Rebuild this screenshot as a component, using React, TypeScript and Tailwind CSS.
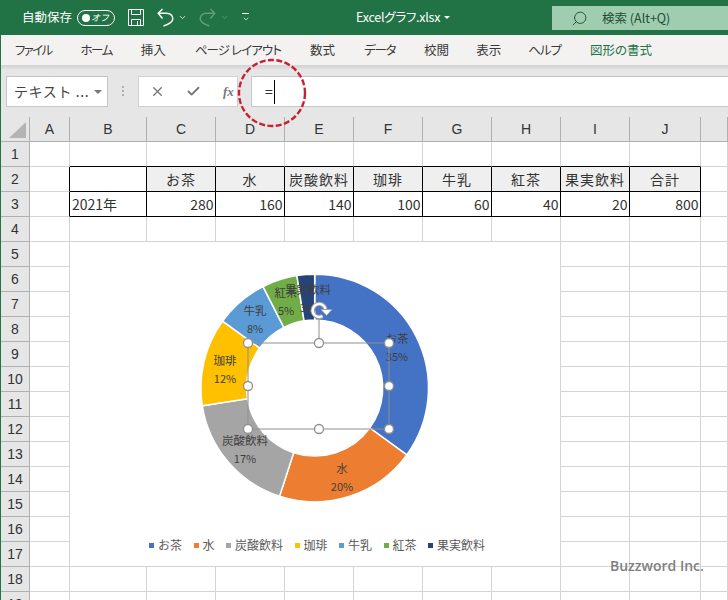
import { Search, X, Check, ChevronDown } from 'lucide-react';

const columns = ['A', 'B', 'C', 'D', 'E', 'F', 'G', 'H', 'I', 'J', ''];
const headers = ['お茶', '水', '炭酸飲料', '珈琲', '牛乳', '紅茶', '果実飲料', '合計'];
const values = ['280', '160', '140', '100', '60', '40', '20', '800'];
const rows = Array.from({ length: 19 }, (_, i) => i + 1);
const menus = [
  { name: 'ファイル', cls: 'tracking-[-1.7px]' },
  { name: 'ホーム', cls: 'tracking-[-1.5px]' },
  { name: '挿入', cls: '' },
  { name: 'ページ レイアウト', cls: 'tracking-[-0.9px]' },
  { name: '数式', cls: '' },
  { name: 'データ', cls: 'tracking-[-1.3px]' },
  { name: '校閲', cls: 'mr-[-2px]' },
  { name: '表示', cls: 'mr-[-2px]' },
  { name: 'ヘルプ', cls: 'tracking-[-1px]' },
];

const slices = [
  { name: 'お茶', value: 280, color: '#4472c4', legend: 'bg-[#4472c4]' },
  { name: '水', value: 160, color: '#ed7d31', legend: 'bg-[#ed7d31]' },
  { name: '炭酸飲料', value: 140, color: '#a5a5a5', legend: 'bg-[#a5a5a5]' },
  { name: '珈琲', value: 100, color: '#ffc000', legend: 'bg-[#ffc000]' },
  { name: '牛乳', value: 60, color: '#5b9bd5', legend: 'bg-[#5b9bd5]' },
  { name: '紅茶', value: 40, color: '#70ad47', legend: 'bg-[#70ad47]' },
  { name: '果実飲料', value: 20, color: '#264478', legend: 'bg-[#264478]' },
];

const labels = [
  { name: 'お茶', pct: '35%', pos: 'left-[327px] top-[88px]' },
  { name: '水', pct: '20%', pos: 'left-[272px] top-[218px]' },
  { name: '炭酸飲料', pct: '17%', pos: 'left-[175px] top-[190px]' },
  { name: '珈琲', pct: '12%', pos: 'left-[155px] top-[110px]' },
  { name: '牛乳', pct: '8%', pos: 'left-[185px] top-[60px]' },
  { name: '紅茶', pct: '5%', pos: 'left-[216px] top-[42px]' },
  { name: '果実飲料', pct: '3%', pos: 'left-[238px] top-[39px]' },
];

const cx = 244.7;
const cy = 146;
const outer = 113.8;
const inner = 68;

function slicePath(start: number, end: number) {
  const pt = (r: number, a: number) => `${cx + r * Math.sin(a)} ${cy - r * Math.cos(a)}`;
  const large = end - start > Math.PI ? 1 : 0;
  return `M${pt(outer, start)} A${outer} ${outer} 0 ${large} 1 ${pt(outer, end)} L${pt(inner, end)} A${inner} ${inner} 0 ${large} 0 ${pt(inner, start)} Z`;
}

function Donut() {
  let acc = 0;
  return (
    <svg className="absolute inset-0" width="490" height="324">
      {slices.map((s) => {
        const start = (acc / 800) * Math.PI * 2;
        acc += s.value;
        const end = (acc / 800) * Math.PI * 2;
        return <path key={s.name} d={slicePath(start, end)} fill={s.color} stroke="#fff" strokeWidth="1.5" />;
      })}
    </svg>
  );
}

function Selection() {
  const handles = [
    [178, 101], [249, 101], [319, 101],
    [178, 144], [319, 144],
    [178, 187], [249, 187], [319, 187],
  ];
  const ring = 'M255.5 67 A6.5 6.5 0 1 0 252.5 74';
  return (
    <svg className="absolute inset-0" width="490" height="324">
      <rect x="178" y="101" width="141" height="86" fill="none" stroke="#8f8f8f" strokeWidth="1" />
      <line x1="249" y1="76" x2="249" y2="101" stroke="#8f8f8f" strokeWidth="1" />
      {handles.map(([x, y]) => (
        <circle key={`${x}-${y}`} cx={x} cy={y} r="4.5" fill="#fff" stroke="#8f8f8f" strokeWidth="1.3" />
      ))}
      <path d={ring} fill="none" stroke="#9a9a9a" strokeWidth="4.4" />
      <path d={ring} fill="none" stroke="#fff" strokeWidth="2.4" />
      <path d="M251 67.5 L262 67.5 L256.5 73.5 Z" fill="#fff" stroke="#9a9a9a" strokeWidth="0.8" />
    </svg>
  );
}

function Chart() {
  return (
    <div className="absolute left-[69px] top-[125px] w-[490px] h-[324px] bg-white">
      <Donut />
      {labels.map((l) => (
        <div
          key={l.name}
          className={`absolute ${l.pos} -translate-x-1/2 flex flex-col items-center gap-[2px] text-[11px] leading-[16px] text-[#404040] whitespace-nowrap`}
        >
          <span className="text-[11.5px]">{l.name}</span>
          <span>{l.pct}</span>
        </div>
      ))}
      <Selection />
      <div className="absolute left-0 right-0 top-[295px] flex gap-[11.5px] pl-[79px] text-[12px] leading-[16px] text-[#595959]">
        {slices.map((s) => (
          <div key={s.name} className="flex items-center gap-[4px]">
            <span className={`w-[5px] h-[5px] ${s.legend}`} />
            <span>{s.name}</span>
          </div>
        ))}
      </div>
    </div>
  );
}

function Cell({ row, col }: { row: number; col: number }) {
  const inTableCol = col >= 1 && col <= 9;
  const inTableRow = row === 2 || row === 3;
  const rightBlack = inTableRow && col >= 0 && col <= 9;
  const bottomBlack = (row === 1 || inTableRow) && inTableCol;
  let content = '';
  let align = 'justify-center';
  if (row === 2 && col >= 2 && col <= 9) content = headers[col - 2];
  if (row === 3 && col === 1) {
    content = '2021年';
    align = 'justify-start pl-[2px]';
  }
  if (row === 3 && col >= 2 && col <= 9) {
    content = values[col - 2];
    align = 'justify-end pr-[1.5px]';
  }
  return (
    <div
      className={`flex items-center h-[25px] border-r border-b text-[14px] text-[#333] whitespace-nowrap ${align} ${
        rightBlack ? 'border-r-black' : 'border-r-[#d4d4d4]'
      } ${bottomBlack ? 'border-b-black' : 'border-b-[#d4d4d4]'} ${
        row === 2 && col >= 2 && col <= 9 ? 'bg-[#efefef] tracking-[1px]' : ''
      }`}
    >
      {content}
    </div>
  );
}

export default function App() {
  return (
    <div className="w-[728px] h-[600px] overflow-hidden bg-white [font-family:'Noto_Sans_CJK_JP','Liberation_Sans',sans-serif]">
      {/* タイトルバー */}
      <div className="h-[35px] bg-[#217346] flex items-center text-white relative">
        <span className="ml-[22px] w-[55px] text-[12.5px] [font-feature-settings:'palt']">自動保存</span>
        <div className="w-[38px] h-[16px] rounded-full border border-white flex items-center justify-between pl-[4px] pr-[5px]">
          <span className="w-[8px] h-[8px] rounded-full bg-white" />
          <span className="text-[9px] italic leading-none">オフ</span>
        </div>
        <svg className="ml-[13px]" width="16" height="17" viewBox="0 0 16 17" fill="none" stroke="#fff" strokeWidth="1">
          <path d="M.5 .5h15v16H.5z" />
          <path d="M3.5 .5v5h9v-5M3.5 16.5v-6h9v6M9.5 12v4" />
        </svg>
        <svg className="ml-[13px]" width="17" height="19" viewBox="0 0 17 19" fill="none" stroke="#fff" strokeWidth="1.4">
          <path d="M5.5 1 L1.2 5.2 L5.5 10.5" />
          <path d="M1.2 5.2 H9.5 C14 5.2 16.5 8.5 15.5 12 C14.8 14.5 11 16.5 6.5 18" />
        </svg>
        <ChevronDown className="ml-[4px]" size={9} strokeWidth={2} />
        <svg className="ml-[12px]" width="17" height="19" viewBox="0 0 17 19" fill="none" stroke="#5f9d7c" strokeWidth="1.4">
          <path d="M11.5 1 L15.8 5.2 L11.5 10.5" />
          <path d="M15.8 5.2 H7.5 C3 5.2 .5 8.5 1.5 12 C2.2 14.5 6 16.5 10.5 18" />
        </svg>
        <ChevronDown className="ml-[4px] text-[#5f9d7c]" size={9} strokeWidth={2} />
        <div className="ml-[13px] w-[7px] flex flex-col items-center gap-[2px]">
          <span className="w-[7px] h-[1px] bg-white" />
          <ChevronDown size={8} strokeWidth={2} className="-mt-[1px]" />
        </div>
        <div className="ml-[107px] w-[83px] text-[12.5px] tracking-[-0.25px] whitespace-nowrap [font-feature-settings:'palt']">Excelグラフ.xlsx</div>
        <span className="ml-[5px] w-0 h-0 border-x-[3px] border-x-transparent border-t-[3px] border-t-white" />
        <div className="ml-auto mt-[1px] w-[176px] h-[24px] bg-[#a0cdb0] flex items-center pl-[19px] text-[#1e4d33]">
          <Search className="-scale-x-100" size={17} strokeWidth={1.3} />
          <span className="ml-[14px] text-[12.5px] [font-feature-settings:'palt']">検索 (Alt+Q)</span>
        </div>
      </div>

      {/* メニュー */}
      <div className="h-[30px] bg-[#f3f2f1] flex items-center gap-[29px] pl-[14px] text-[12.5px] text-[#3b3a39] whitespace-nowrap [font-feature-settings:'palt'] border-l border-[#217346]">
        {menus.map((m) => (
          <span key={m.name} className={m.cls}>
            {m.name}
          </span>
        ))}
        <span className="text-[#217346]">図形の書式</span>
      </div>

      {/* 数式バー */}
      <div className="h-[52px] border-l border-[#217346] bg-gradient-to-b from-[#d2d2d2] from-0% to-[#e6e6e6] to-[10%] flex items-start pt-[11px] relative">
        <div className="ml-[5px] w-[102px] h-[31px] bg-white border border-[#c6c6c6] flex items-center pl-[7px] text-[14px] tracking-[0.6px] text-[#444] whitespace-nowrap">
          <span className="w-[80px]">テキスト ...</span>
          <span className="w-0 h-0 border-x-[4px] border-x-transparent border-t-[4px] border-t-[#777]" />
        </div>
        <div className="ml-[14px] mt-[10px] flex flex-col gap-[2px]">
          <span className="w-[2px] h-[2px] bg-[#b0b0b0]" />
          <span className="w-[2px] h-[2px] bg-[#b0b0b0]" />
          <span className="w-[2px] h-[2px] bg-[#b0b0b0]" />
        </div>
        <div className="ml-[14px] w-[100px] h-[31px] bg-white border border-[#d0d0d0] flex items-center pl-[11px] text-[#777]">
          <X size={15} strokeWidth={2.2} />
          <Check className="ml-[21px]" size={15} strokeWidth={3} />
          <span className="ml-[22px] text-[13px] italic font-bold [font-family:'Liberation_Serif',serif]">fx</span>
        </div>
        <div className="ml-[13px] flex-1 h-[31px] bg-white border-y border-l border-[#c6c6c6] flex items-center pl-[13px] text-[14px] text-[#333]">
          =
          <span className="ml-[1px] w-[1px] h-[24px] bg-black" />
        </div>
      </div>

      {/* シート */}
      <div className="relative border-l border-[#217346]">
        <div className="grid grid-cols-[29px_40px_77px_69px_69px_69px_69px_69px_69px_69px_71px_27px] grid-rows-[25px] auto-rows-[25px]">
          <div className="h-[25px] bg-[#e6e6e6] border-r border-b border-[#b0b0b0] relative">
            <svg className="absolute left-[8px] top-[5px]" width="17" height="16">
              <path d="M17 0V16H0Z" fill="#b4b4b4" />
            </svg>
          </div>
          {columns.map((c, i) => (
            <div
              key={i}
              className="h-[25px] bg-[#e6e6e6] border-b border-r border-[#b0b0b0] flex items-center justify-center text-[14px] text-[#333] [font-family:'Liberation_Sans',sans-serif]"
            >
              {c}
            </div>
          ))}
          {rows.map((r) => (
            <div key={r} className="contents">
              <div className="h-[25px] bg-[#e6e6e6] border-r border-b border-[#b0b0b0] flex items-center justify-center text-[14px] text-[#333] [font-family:'Liberation_Sans',sans-serif]">
                {r}
              </div>
              {columns.map((_, i) => (
                <Cell key={i} row={r} col={i} />
              ))}
            </div>
          ))}
        </div>
        <Chart />
        <span className="absolute left-[609px] top-[439px] text-[14px] leading-[20px] font-semibold text-[#7f7f7f] whitespace-nowrap [font-family:'Open_Sans',sans-serif]">
          Buzzword Inc.
        </span>
      </div>

      {/* 赤い破線の円 */}
      <svg className="absolute left-[236px] top-[57px]" width="73" height="73">
        <circle cx="36" cy="36" r="33" fill="none" stroke="#c8202f" strokeWidth="2.4" strokeDasharray="6 2.4" />
      </svg>
    </div>
  );
}
